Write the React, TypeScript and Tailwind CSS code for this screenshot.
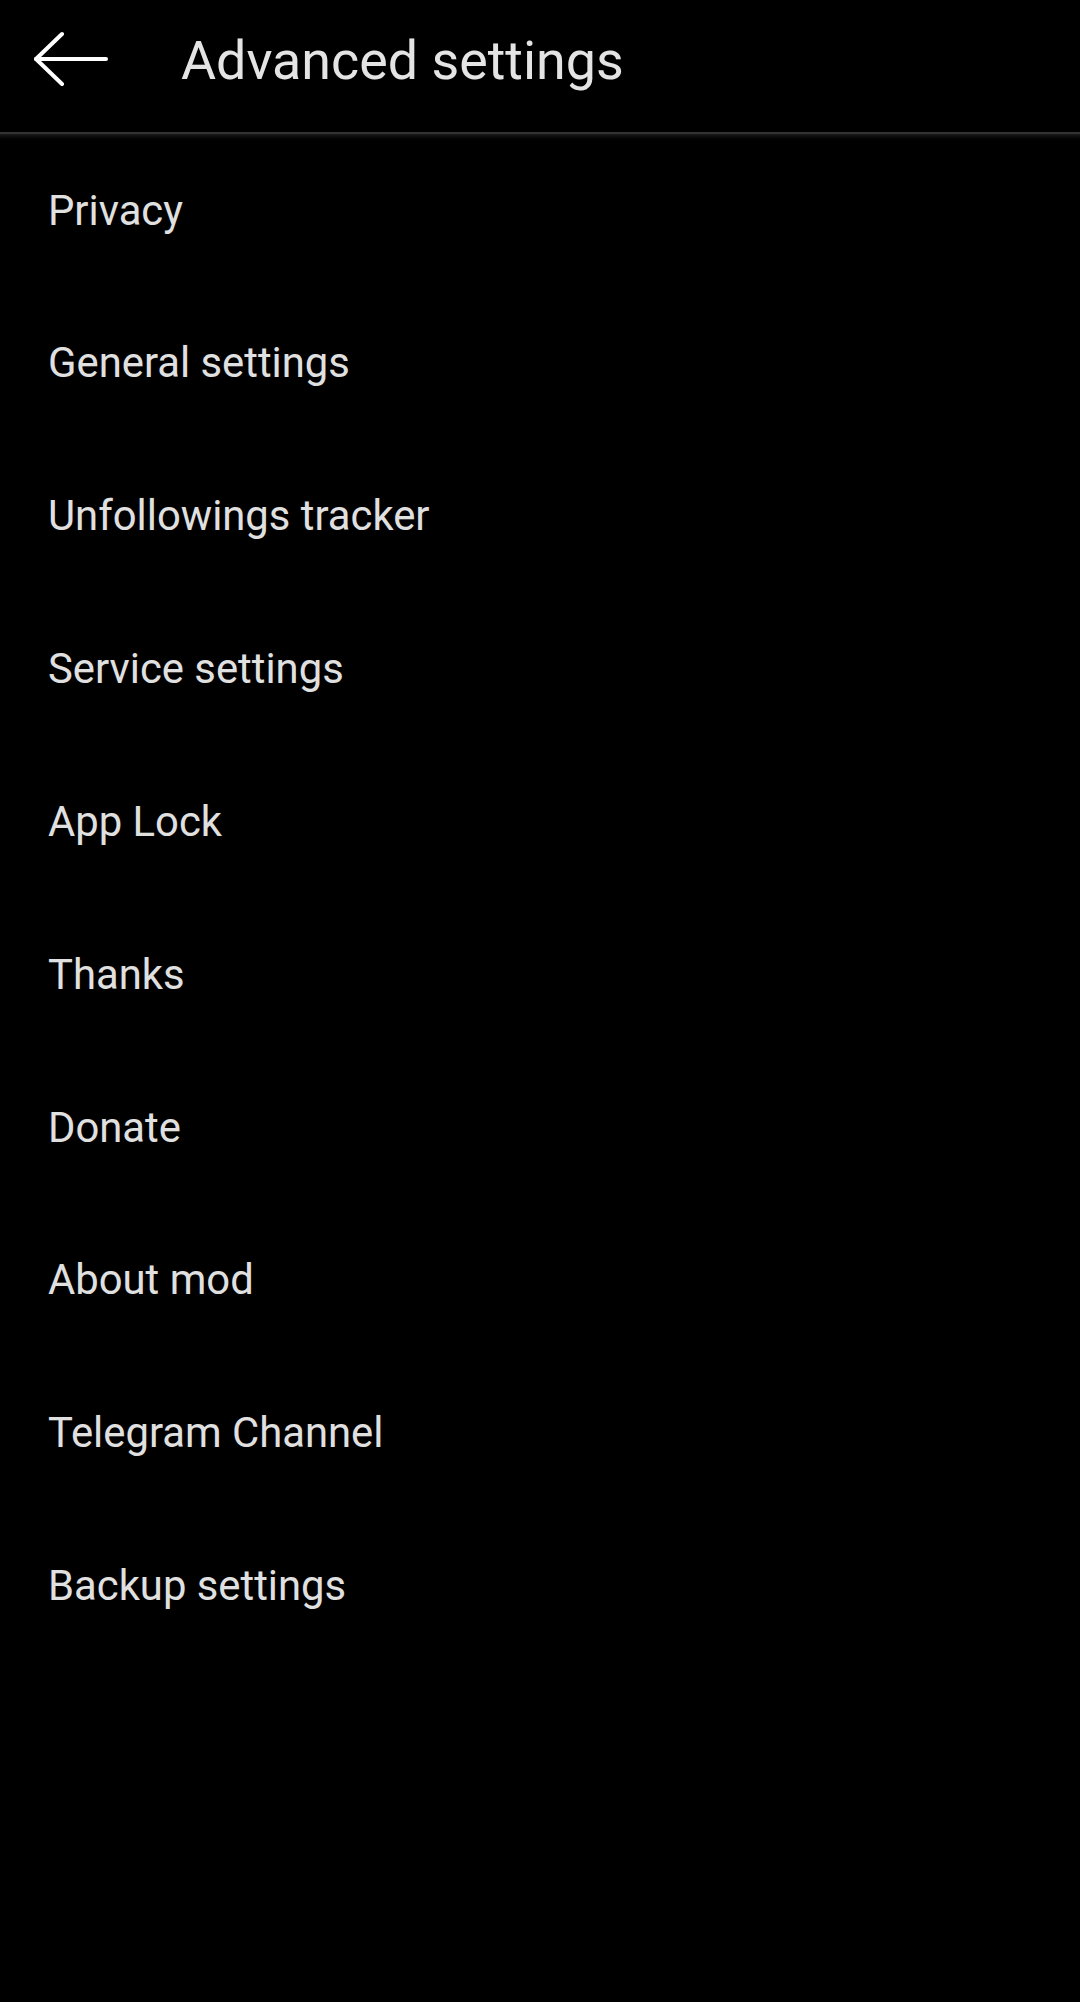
const ITEMS = [
  "Privacy",
  "General settings",
  "Unfollowings tracker",
  "Service settings",
  "App Lock",
  "Thanks",
  "Donate",
  "About mod",
  "Telegram Channel",
  "Backup settings",
];

function BackArrow() {
  return (
    <svg width="74" height="56" viewBox="0 0 74 56" fill="none" stroke="#ffffff" strokeWidth="4" strokeLinecap="round" strokeLinejoin="round">
      <path d="M2 28 L72 28" />
      <path d="M28 3 L2 28 L28 53" />
    </svg>
  );
}

export default function App() {
  return (
    <div className="min-h-[2002px] w-[1080px] bg-black text-[#e0e0e0]" style={{ fontFamily: "Roboto, 'Noto Sans', sans-serif" }}>
      <header className="relative h-[134px] bg-black">
        <div className="flex h-[118px] items-center">
          <button className="ml-[34px] flex items-center">
            <BackArrow />
          </button>
          <h1 className="ml-[73px] pt-[3px] text-[53.8px] font-normal leading-none text-[#e4e4e4]">Advanced settings</h1>
        </div>
        <div className="mt-[14px] h-[2px] bg-[#333333]" />
        <div className="absolute left-0 right-0 top-full h-[9px] bg-gradient-to-b from-[#1a1a1a] to-black" />
      </header>
      <ul>
        {ITEMS.map((label) => (
          <li key={label} className="flex h-[152.85px] items-center pl-[48px] text-[41.8px] leading-none">
            {label}
          </li>
        ))}
      </ul>
    </div>
  );
}
